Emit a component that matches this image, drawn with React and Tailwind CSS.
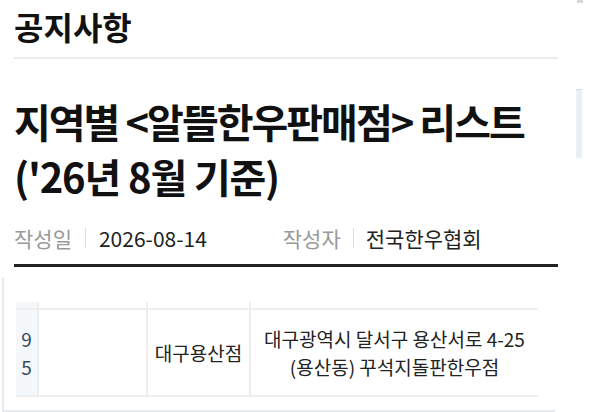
export default function App() {
  return (
    <div className="relative h-[412px] w-[592px] overflow-hidden bg-white font-['Noto_Sans_CJK_KR','Noto_Sans',sans-serif] text-[#222]">
      <div className="ml-[14px] w-[544px]">
        <h2 className="border-b-2 border-[#ebebeb] pb-[11px] pt-[6px] text-[32px] font-bold leading-[40px] text-[#111]">
          공지사항
        </h2>
        <h1 className="mt-[35px] text-[40px] font-bold leading-[55px] tracking-[-1.2px] text-[#111]">
          <span className="tracking-[-2px]">지역별 &lt;알뜰한우판매점&gt; 리스트</span>
          <br />
          ('26년 8월 기준)
        </h1>
        <div className="mt-[20px] flex items-center border-b-[3px] border-[#222] pb-[12px] text-[21px] leading-[28px]">
          <span className="text-[#999]">작성일</span>
          <span className="mx-[13px] h-[20px] w-px bg-[#dcdcdc]" />
          <span className="text-[#222]">2026-08-14</span>
          <span className="ml-[76px] text-[#999]">작성자</span>
          <span className="mx-[12px] h-[20px] w-px bg-[#dcdcdc]" />
          <span className="text-[#222]">전국한우협회</span>
        </div>
      </div>

      <div className="ml-[2px] mt-[11px] w-[553px] border-b-2 border-l-2 border-[#e6ebf0] pb-[13px] pl-[12px] pt-[24px]">
        <table className="w-[522px] table-fixed border-collapse text-[19px] leading-[28px] text-[#222]">
          <colgroup>
            <col className="w-[22px]" />
            <col className="w-[109px]" />
            <col className="w-[103px]" />
            <col className="w-[288px]" />
          </colgroup>
          <tbody>
            <tr className="h-[7px]">
              <td className="bg-[#f5f8fb] p-0" />
              <td className="border-l-2 border-[#eeeeee] p-0" />
              <td className="border-l-2 border-[#eeeeee] p-0" />
              <td className="border-l-2 border-[#eeeeee] p-0" />
            </tr>
            <tr className="h-[87px] border-y-2 border-[#eeeeee]">
              <td className="break-all bg-[#f5f8fb] p-0 text-center text-[#3a4a5c]">95</td>
              <td className="border-l-2 border-[#eeeeee] p-0" />
              <td className="border-l-2 border-[#eeeeee] p-0 text-center">대구용산점</td>
              <td className="border-l-2 border-[#eeeeee] p-0 text-center">
                대구광역시 달서구 용산서로 4-25
                <br />
                (용산동) 꾸석지돌판한우점
              </td>
            </tr>
          </tbody>
        </table>
      </div>

      <div className="absolute right-[9px] top-0 h-[3px] w-[6px] bg-[#d8d8d8]" />
      <div className="absolute right-[10px] top-[89px] h-[69px] w-[6px] border-t border-[#d4dde8] bg-[#e8eff7]" />
    </div>
  );
}
